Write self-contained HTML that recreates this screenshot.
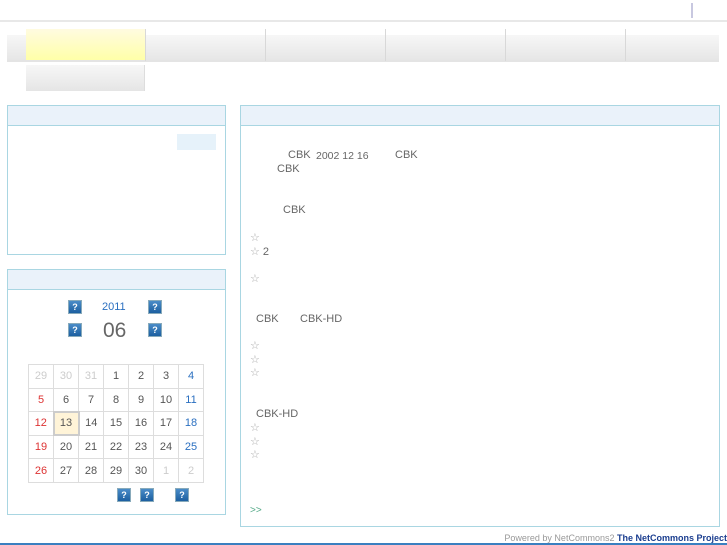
<!DOCTYPE html>
<html><head><meta charset="utf-8"><style>
*{margin:0;padding:0;box-sizing:border-box}
body{width:727px;height:545px;position:relative;background:#fff;font-family:"Liberation Sans",sans-serif;color:#555;overflow:hidden;font-size:11px}
.a{position:absolute}
.tab{position:absolute;top:35px;height:25px;background:linear-gradient(#f7f7f7,#e6e6e6)}
.sep{position:absolute;top:29px;height:32px;width:1px;background:#d8d8d8}
.box{position:absolute;border:1px solid #a9d6e2;background:#fff}
.box .h{height:20px;background:#eaf2fa;border-bottom:1px solid #a9d6e2}
.ic{position:absolute;width:14px;height:14px;background:linear-gradient(#4a8cc8,#1c5fa0);border:1px solid #8ab;color:#fff;font-size:9px;font-weight:bold;text-align:center;line-height:12px}
table{position:absolute;left:28px;top:364px;border-collapse:collapse}
td{width:25px;height:23.6px;border:1px solid #ddd;text-align:center;font-size:11px;color:#555}
.g{color:#ccc}.r{color:#d33}.b{color:#2a6fc0}
.t{position:absolute;font-size:11px;color:#666;white-space:nowrap}
</style></head><body>
<div class="a" style="left:0;top:20px;width:727px;height:2px;background:#e8e8e8"></div>
<div class="a" style="left:691px;top:3px;width:2px;height:15px;background:#c8c8e0"></div>
<div class="tab" style="left:7px;width:712px"></div>
<div class="a" style="left:7px;top:60px;width:712px;height:2px;background:#e4e4e4"></div>
<div class="a" style="left:26px;top:29px;width:119px;height:31px;background:linear-gradient(#fffbe0,#ffffa8)"></div>
<div class="sep" style="left:145px"></div><div class="sep" style="left:265px"></div><div class="sep" style="left:385px"></div><div class="sep" style="left:505px"></div><div class="sep" style="left:625px"></div>
<div class="a" style="left:26px;top:65px;width:119px;height:26px;background:linear-gradient(#f7f7f7,#e5e5e5);border-right:1px solid #ddd"></div>

<div class="box" style="left:7px;top:105px;width:219px;height:150px"><div class="h"></div></div>
<div class="a" style="left:177px;top:134px;width:39px;height:16px;background:#e6f2fa"></div>

<div class="box" style="left:7px;top:269px;width:219px;height:246px"><div class="h"></div></div>
<div class="ic" style="left:68px;top:300px">?</div><div class="ic" style="left:148px;top:300px">?</div>
<div class="ic" style="left:68px;top:323px">?</div><div class="ic" style="left:148px;top:323px">?</div>
<div class="t" style="left:102px;top:301px;color:#2a6fc0">2011</div>
<div class="t" style="left:103px;top:319px;font-size:21px;color:#666">06</div>
<table>
<tr><td class="g">29</td><td class="g">30</td><td class="g">31</td><td>1</td><td>2</td><td>3</td><td class="b">4</td></tr>
<tr><td class="r">5</td><td>6</td><td>7</td><td>8</td><td>9</td><td>10</td><td class="b">11</td></tr>
<tr><td class="r">12</td><td style="background:#fff4d8;border:2px solid #ccc">13</td><td>14</td><td>15</td><td>16</td><td>17</td><td class="b">18</td></tr>
<tr><td class="r">19</td><td>20</td><td>21</td><td>22</td><td>23</td><td>24</td><td class="b">25</td></tr>
<tr><td class="r">26</td><td>27</td><td>28</td><td>29</td><td>30</td><td class="g">1</td><td class="g">2</td></tr>
</table>
<div class="ic" style="left:117px;top:488px">?</div><div class="ic" style="left:140px;top:488px">?</div><div class="ic" style="left:175px;top:488px">?</div>

<div class="box" style="left:240px;top:105px;width:480px;height:422px"><div class="h"></div></div>
<div class="t" style="left:288px;top:149px">CBK</div>
<div class="t" style="left:316px;top:150px;font-size:10.5px">2002 12 16</div>
<div class="t" style="left:395px;top:149px">CBK</div>
<div class="t" style="left:277px;top:163px">CBK</div>
<div class="t" style="left:283px;top:204px">CBK</div>
<div class="t" style="left:250px;top:231px;color:#aaa">☆</div>
<div class="t" style="left:250px;top:245px"><span style="color:#aaa">☆</span> 2</div>
<div class="t" style="left:250px;top:272px;color:#aaa">☆</div>
<div class="t" style="left:256px;top:313px">CBK&nbsp;&nbsp;&nbsp;&nbsp;&nbsp;&nbsp; CBK-HD</div>
<div class="t" style="left:250px;top:340px;color:#aaa;line-height:13.5px">☆<br>☆<br>☆</div>
<div class="t" style="left:256px;top:408px">CBK-HD</div>
<div class="t" style="left:250px;top:422px;color:#aaa;line-height:13.5px">☆<br>☆<br>☆</div>
<div class="t" style="left:250px;top:505px;color:#5a8;font-size:10px">&gt;&gt;</div>

<div class="t" style="right:0;top:533px;font-size:9px;color:#999">Powered by NetCommons2 <b style="color:#1a3d8f">The NetCommons Project</b></div>
<div class="a" style="left:0;top:543px;width:727px;height:2px;background:#3a7fc0"></div>
</body></html>
